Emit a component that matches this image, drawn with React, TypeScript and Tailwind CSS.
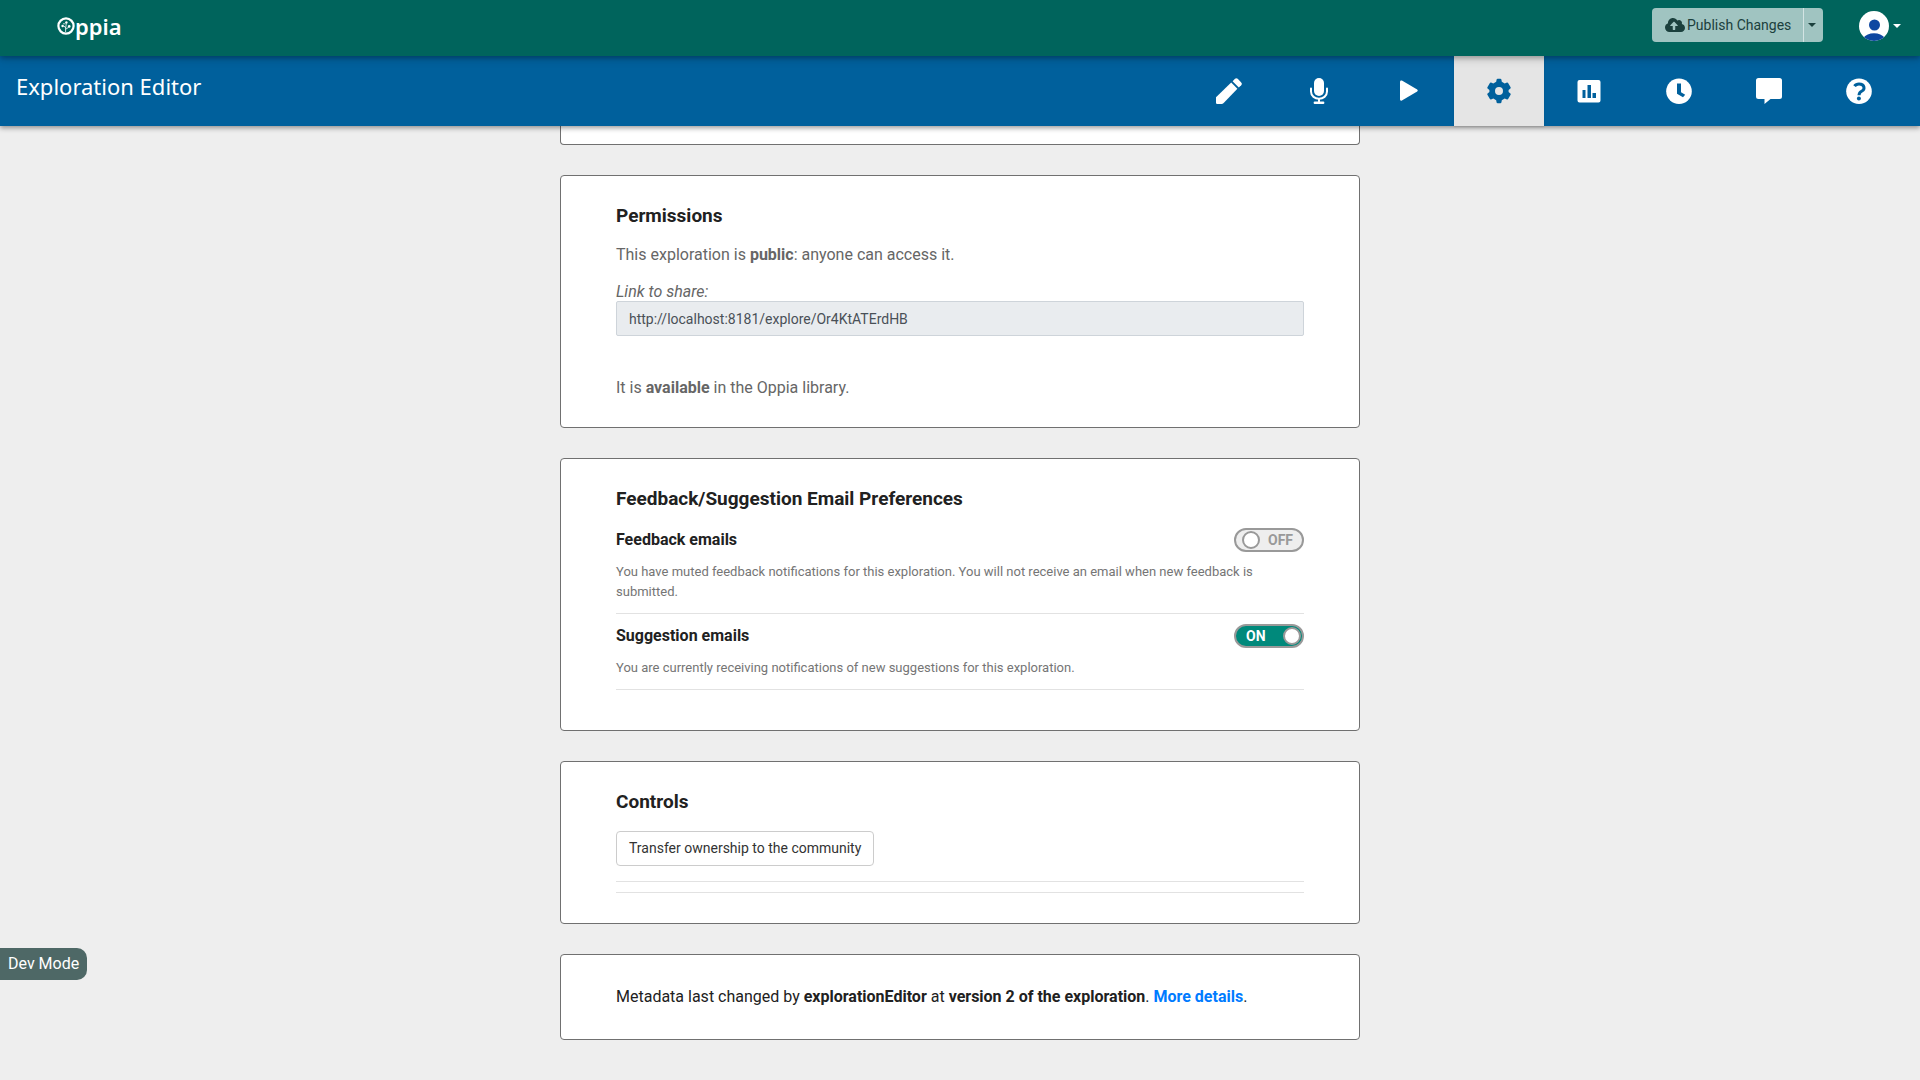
import React from "react";
import { FaCloudUploadAlt } from "react-icons/fa";

const NAV_ICONS: { label: string; active?: boolean; icon: React.ReactNode }[] = [
  {
    label: "Editor",
    icon: (
      <>
        <path d="M0 19.2 15.2 4.6 21.4 10.8 7.4 25.2Q6.6 26 5.6 26H1.2Q0 26 0 24.8Z" />
        <path d="M16.6 3.2 19 .8Q20.3-.4 21.7.8L25.2 4.4Q26.5 5.8 25.2 7.2L22.8 9.5Z" />
      </>
    ),
  },
  {
    label: "Translations",
    icon: (
      <>
        <rect x="8" y="0" width="10" height="18" rx="5" />
        <path
          d="M5 10.5V13.5C5 23 21 23 21 13.5V10.5"
          fill="none"
          stroke="currentColor"
          strokeWidth="2"
          strokeLinecap="round"
        />
        <path d="M12 20h2v3.6h3.2a1.2 1.2 0 0 1 0 2.4H8.800a1.200 1.200 0 0 1 0-2.400H12Z" />
      </>
    ),
  },
  {
    label: "Preview",
    icon: <path d="M4 3.600Q4.200 2 5.900 2.600L21.200 11.600Q22.400 12.500 21.200 13.400L5.900 22.400Q4.200 23.200 4 21.500Z" />,
  },
  {
    label: "Settings",
    active: true,
    icon: (
      <path
        fillRule="evenodd"
        d="M10.200 3.800 10.600 1.400Q10.900.7 11.600.7H14.400Q15.100.7 15.400 1.400L15.800 3.800 18.700 5.500 21 4.600Q21.700 4.400 22.100 5L24.600 9.300Q25 10 24.400 10.500L22.600 12V14L24.400 15.600Q25 16.100 24.600 16.800L22.100 21Q21.700 21.600 21 21.400L18.700 20.500 15.800 22.200 15.400 24.600Q15.100 25.300 14.400 25.300H11.600Q10.900 25.300 10.600 24.600L10.200 22.200 7.300 20.500 5 21.400Q4.300 21.600 3.900 21L1.400 16.800Q1 16.100 1.600 15.600L3.400 14V12L1.600 10.500Q1 10 1.400 9.300L3.900 5Q4.300 4.400 5 4.600L7.300 5.500ZM13 9a4 4 0 1 0 0 8a4 4 0 1 0 0-8Z"
      />
    ),
  },
  {
    label: "Statistics",
    icon: (
      <path
        fillRule="evenodd"
        d="M3.500 2H22.500Q24.500 2 24.500 4V22.500Q24.500 24.500 22.500 24.500H3.500Q1.500 24.500 1.500 22.500V4Q1.500 2 3.500 2ZM6.500 12V20H9.500V12ZM11.500 7V20H15V7ZM16.500 15V20H20V15Z"
      />
    ),
  },
  {
    label: "History",
    icon: (
      <>
        <circle cx="13" cy="13.200" r="12.800" />
        <path d="M11 5.500H15V14.200L19.200 16.800 17 19.200 11 15.800Z" className="fill-[#00609c]" />
      </>
    ),
  },
  {
    label: "Feedback",
    icon: <path d="M2.500 0H23.500Q26 0 26 2.500V18.500Q26 21 23.500 21H14.500L8.500 26V21H2.500Q0 21 0 18.500V2.500Q0 0 2.500 0Z" />,
  },
  {
    label: "Help",
    icon: (
      <>
        <circle cx="13" cy="13.200" r="12.800" />
        <path
          d="M8.500 8.200Q10 6 13 6C19 6 19 11.500 16 13Q13 14.500 13 17.300"
          fill="none"
          className="stroke-[#00609c]"
          strokeWidth="3"
        />
        <circle cx="12.900" cy="20.500" r="2" className="fill-[#00609c]" />
      </>
    ),
  },
];

function Logo() {
  return (
    <a href="#" aria-label="Oppia" className="mb-1 ml-[57px] flex items-center text-white">
      <svg width="18" height="18" viewBox="0 0 18 18" aria-hidden="true">
        <circle cx="9" cy="9" r="7.600" fill="none" stroke="currentColor" strokeWidth="2.200" />
        <g fill="currentColor">
          <circle cx="9.400" cy="5.400" r="1.200" />
          <circle cx="5.600" cy="9" r="1.200" />
          <circle cx="12.200" cy="9.400" r="1.300" />
          <circle cx="7" cy="6.800" r=".7" />
        </g>
        <path
          d="M8.600 15V11Q8.400 9.500 6.400 9M8.800 12Q11 11.500 11.800 9.600M8.700 11 9.300 6"
          fill="none"
          stroke="currentColor"
          strokeWidth=".8"
        />
      </svg>
      <span className="font-['Noto_Sans',sans-serif] text-[22px] leading-7 font-semibold">ppia</span>
    </a>
  );
}

function Card({ title, className, children }: { title?: string; className: string; children: React.ReactNode }) {
  return (
    <section className={`rounded border border-[#707070] bg-white px-[55px] ${className}`}>
      {title && <h2 className="text-[19px] leading-6 font-bold text-[#212121]">{title}</h2>}
      {children}
    </section>
  );
}

function Toggle({ id, on }: { id: string; on: boolean }) {
  return (
    <span className="relative flex h-6 w-[70px]">
      <input
        id={id}
        type="checkbox"
        role="switch"
        defaultChecked={on}
        className="peer size-full appearance-none rounded-full border-2 border-[#999] bg-[#eee] checked:bg-[#00897b]"
      />
      <span className="pointer-events-none absolute top-[3px] left-2 size-[18px] rounded-full border-2 border-[#999] bg-white peer-checked:left-[49px]" />
      <span
        aria-hidden="true"
        className="pointer-events-none absolute top-0.5 left-[34px] text-sm leading-5 font-bold text-[#999] peer-checked:left-3 peer-checked:text-white"
      >
        {on ? "ON" : "OFF"}
      </span>
    </span>
  );
}

function EmailPreference({ id, label, on, text }: { id: string; label: string; on: boolean; text: string }) {
  return (
    <div className="mb-2.5 border-b border-[#e2e2e2] pb-[11px]">
      <div className="flex items-center justify-between">
        <label htmlFor={id} className="leading-6 font-bold text-[#212121]">
          {label}
        </label>
        <Toggle id={id} on={on} />
      </div>
      <p className="mt-2.5 text-[13px] leading-5 text-[#757575]">{text}</p>
    </div>
  );
}

function Caret() {
  return (
    <svg width="8" height="4" viewBox="0 0 8 4" fill="currentColor" className="shrink-0" aria-hidden="true">
      <path d="M0 0H8L4 4Z" />
    </svg>
  );
}

export default function App() {
  return (
    <div className="min-h-screen bg-[#eee] font-[Roboto,sans-serif] text-base text-[#212121]">
      <header className="relative z-20 flex h-14 items-center justify-between bg-[#00645c] shadow-[0_2px_5px_rgba(0,0,0,0.26),0_2px_10px_rgba(0,0,0,0.16)]">
        <Logo />
        <div className="mr-[19px] flex items-center">
          <div className="mr-9 mb-1.5 flex h-[34px] overflow-hidden rounded text-[#1b403d]">
            <button className="flex w-[151px] items-center gap-0.5 bg-[#a0c4c1] pl-[13px] text-sm leading-5">
              <FaCloudUploadAlt className="h-4 w-5 shrink-0" />
              <span className="whitespace-nowrap">Publish Changes</span>
            </button>
            <button
              aria-label="More publish options"
              className="flex w-5 items-center justify-center border-l border-[#d3e4e3] bg-[#a0c4c1] pr-1"
            >
              <Caret />
            </button>
          </div>
          <button aria-label="Profile menu" className="mb-1 flex items-center gap-1 text-white">
            <svg width="30" height="30" viewBox="0 0 30 30" aria-hidden="true">
              <clipPath id="avatar-clip">
                <circle cx="15" cy="15" r="15" />
              </clipPath>
              <g clipPath="url(#avatar-clip)">
                <rect width="30" height="30" fill="#fff" />
                <circle cx="15.500" cy="14" r="5.500" fill="#0d47a1" />
                <path d="M4 27Q8 22.500 15 22.300Q22 22.500 26 27V30H4Z" fill="#0d47a1" />
              </g>
            </svg>
            <Caret />
          </button>
        </div>
      </header>

      <nav
        aria-label="Exploration Editor"
        className="relative z-10 flex h-[70px] justify-between bg-[#00609c] pr-4 pl-4 shadow-[0_2px_5px_rgba(0,0,0,0.4)]"
      >
        <h1 className="mt-3.5 font-['Noto_Sans',sans-serif] text-[22px] leading-8 text-white">Exploration Editor</h1>
        <ul className="flex">
          {NAV_ICONS.map(({ label, active, icon }) => (
            <li key={label} className="flex">
              <a
                href="#"
                aria-label={label}
                className={`flex w-[90px] items-center justify-center ${
                  active ? "bg-[#e5e5e5] text-[#00609c] shadow-[0_1px_2px_rgba(0,0,0,0.1)]" : "text-white"
                }`}
              >
                <svg width="26" height="26" viewBox="0 0 26 26" fill="currentColor" aria-hidden="true">
                  {icon}
                </svg>
              </a>
            </li>
          ))}
        </ul>
      </nav>

      <main className="mx-auto flex max-w-[800px] flex-col gap-[30px] pb-10">
        <div className="h-[19px] rounded-b border border-t-0 border-[#707070] bg-white" />

        <Card title="Permissions" className="pt-7 pb-[27px]">
          <div className="text-[#666]">
            <p className="mt-[15px] leading-6">
              This exploration is <b>public</b>: anyone can access it.
            </p>
            <label htmlFor="share-link" className="mt-4 block leading-[18px] italic">
              Link to share:
            </label>
            <input
              id="share-link"
              readOnly
              value="http://localhost:8181/explore/Or4KtATErdHB"
              className="block h-[35px] w-full rounded-xs border border-[#ced4da] bg-[#e9ecef] px-3 text-sm text-[#495057]"
            />
            <p className="mt-10 leading-6">
              It is <b>available</b> in the Oppia library.
            </p>
          </div>
        </Card>

        <Card title="Feedback/Suggestion Email Preferences" className="pt-7 pb-[30px]">
          <div className="mt-[17px]">
            <EmailPreference
              id="feedback-emails"
              label="Feedback emails"
              on={false}
              text="You have muted feedback notifications for this exploration. You will not receive an email when new feedback is submitted."
            />
            <EmailPreference
              id="suggestion-emails"
              label="Suggestion emails"
              on
              text="You are currently receiving notifications of new suggestions for this exploration."
            />
          </div>
        </Card>

        <Card title="Controls" className="pt-7 pb-[30px]">
          <button className="mt-[17px] block h-[35px] rounded border border-[#ccc] bg-white px-3 pb-0.5 text-sm text-[#333]">
            Transfer ownership to the community
          </button>
          <hr className="mt-[15px] border-[#e2e2e2]" />
          <hr className="mt-2.5 border-[#e2e2e2]" />
        </Card>

        <Card className="py-[30px]">
          <p className="leading-6">
            Metadata last changed by <b>explorationEditor</b> at <b>version 2 of the exploration</b>.{" "}
            <a href="#" className="font-bold text-[#007bff]">
              More details
            </a>
            .
          </p>
        </Card>
      </main>

      <div className="fixed bottom-[100px] left-0 z-30 rounded-r-[10px] bg-[#4e6866] px-2 py-1 leading-6 text-white">
        Dev Mode
      </div>
    </div>
  );
}
